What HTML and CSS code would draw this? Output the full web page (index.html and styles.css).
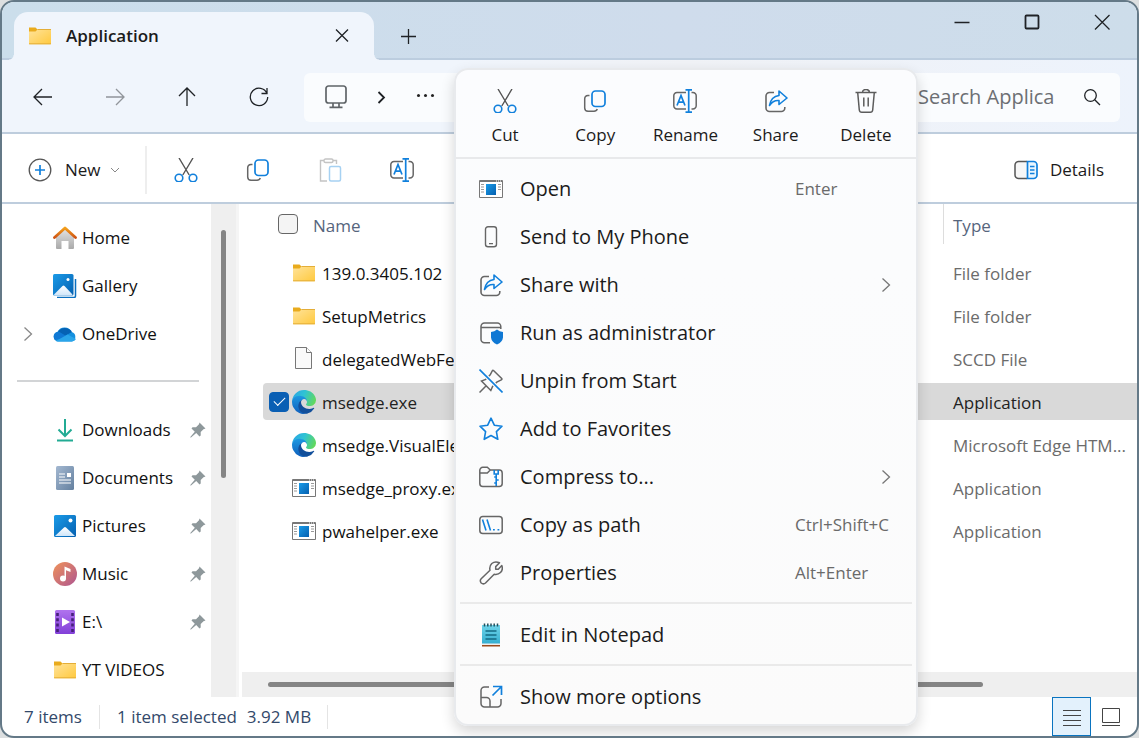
FILE: index.html
```html
<!DOCTYPE html>
<html lang="en">
<head>
<meta charset="utf-8">
<title>Application</title>
<link rel="stylesheet" href="styles.css">
</head>
<body>
<svg class="sprite" aria-hidden="true">
  <defs>
    <linearGradient id="gFolder" x1="0" y1="0" x2="1" y2="1"><stop offset="0" stop-color="#ffe39a"/><stop offset="1" stop-color="#ffc93e"/></linearGradient>
    <linearGradient id="gBlue" x1="0" y1="0" x2="1" y2="1"><stop offset="0" stop-color="#1a9be8"/><stop offset="1" stop-color="#0560b0"/></linearGradient>
    <linearGradient id="gSnow" x1="0" y1="0" x2="0" y2="1"><stop offset="0" stop-color="#fff"/><stop offset="1" stop-color="#cfe6fa"/></linearGradient>
    <linearGradient id="gRoof" x1="0" y1="0" x2="0" y2="1"><stop offset="0" stop-color="#f3a01c"/><stop offset="1" stop-color="#cf5414"/></linearGradient>
    <linearGradient id="gWall" x1="0" y1="0" x2="0" y2="1"><stop offset="0" stop-color="#e4e4e4"/><stop offset="1" stop-color="#a9a9a9"/></linearGradient>
    <linearGradient id="gDoc" x1="0" y1="0" x2="1" y2="1"><stop offset="0" stop-color="#a3b8d1"/><stop offset="1" stop-color="#64809f"/></linearGradient>
    <linearGradient id="gMusic" x1="0" y1="0" x2="1" y2="1"><stop offset="0" stop-color="#f0935a"/><stop offset="1" stop-color="#ae5590"/></linearGradient>
    <linearGradient id="gVideo" x1="0" y1="0" x2="0" y2="1"><stop offset="0" stop-color="#b073ee"/><stop offset="1" stop-color="#8240d8"/></linearGradient>
    <linearGradient id="gEdgeTop" x1="0" y1=".3" x2="1" y2=".6"><stop offset="0" stop-color="#2aa6e4"/><stop offset=".45" stop-color="#2fc3d4"/><stop offset="1" stop-color="#63d95a"/></linearGradient>
    <linearGradient id="gEdgeLeft" x1="0" y1="0" x2="0" y2="1"><stop offset="0" stop-color="#1e9ce4"/><stop offset="1" stop-color="#0f5fbc"/></linearGradient>
    <linearGradient id="gNote" x1="0" y1="0" x2="0" y2="1"><stop offset="0" stop-color="#6fd4ea"/><stop offset="1" stop-color="#35aed0"/></linearGradient>

    <symbol id="folder" viewBox="0 0 24 24"><path d="M1 3.500h6.500l2 2v4H1z" fill="#e9ab1d"/><path d="M1 7.500h6.500l2-2H23V19.500a.8.800 0 0 1-.8.800H1.800A.8.800 0 0 1 1 19.500z" fill="url(#gFolder)"/><path d="M1 19.800h22M9.500 5.500H23" stroke="#e4ae38"/></symbol>
    <symbol id="file" viewBox="0 0 24 24"><path d="M3.500.5h11l5 5V21.500h-16z" fill="#fafafa" stroke="#777"/><path d="M14.500.5v5h5" fill="#fff" stroke="#777"/></symbol>
    <symbol id="exe" viewBox="0 0 24 24"><path d="M.5 3.500h23v17H.5z" fill="#fff" stroke="#777"/><path d="M1 4h22" stroke="#777" stroke-width="2"/><path d="M7 7h10v11H7z" fill="url(#gBlue)"/><path d="M2 7.500h3M2 10h3M2 12.500h3M2 15h3M19 7.500h3M19 10h3M19 12.500h3" stroke="#999"/><path d="M17 4h1M19 4h1M21 4h1" stroke="#fff"/></symbol>
    <symbol id="edge" viewBox="0 0 256 256">
      <path d="M231 190.500c-3.400 1.800-6.900 3.400-10.500 4.700a102 102 0 0 1-35.900 6.500c-47.300 0-88.500-32.500-88.500-74.300a31.500 31.500 0 0 1 16.400-27.300c-42.800 1.800-53.800 46.400-53.800 72.500 0 74 68.100 81.400 82.800 81.400 7.900 0 19.800-2.300 27-4.600l1.300-.4a128 128 0 0 0 66.600-52.800 4 4 0 0 0-5.400-5.700z" fill="#124f9b"/>
      <path d="M105.700 241.400a79 79 0 0 1-22.700-21.300 80.700 80.700 0 0 1 29.500-120c3.200-1.500 8.500-4.200 15.600-4.100a32.400 32.400 0 0 1 25.700 13 32 32 0 0 1 6.300 18.700c0-.2 24.500-79.600-80-79.600-43.900 0-80 41.600-80 78.200a130 130 0 0 0 12.100 56 128 128 0 0 0 156.400 67 75.500 75.500 0 0 1-62.800-8z" fill="url(#gEdgeLeft)"/>
      <path d="M152.300 148.900c-.8 1-3.300 2.500-3.300 5.700 0 2.600 1.700 5.100 4.700 7.200 14.400 10 41.500 8.700 41.600 8.700a59.600 59.600 0 0 0 30.300-8.300 61.400 61.400 0 0 0 30.400-52.900c.3-22.400-8-37.300-11.300-43.900C223.500 24 177.700 0 128 0A128 128 0 0 0 0 126.200c.5-36.500 36.800-66 80-66 3.500 0 23.500.3 42 10.100 16.300 8.600 24.900 19 30.900 29.200 6.200 10.700 7.300 24.200 7.300 29.600 0 5.300-2.700 13.300-7.900 19.900z" fill="url(#gEdgeTop)"/>
    </symbol>
    <symbol id="home" viewBox="0 0 24 24"><path d="M3 10.500 12 2.500l9 8V22a1 1 0 0 1-1 1h-4.500v-8h-7v8H4a1 1 0 0 1-1-1z" fill="url(#gWall)"/><path d="M1.500 11.500 12 2l10.500 9.500" fill="none" stroke="url(#gRoof)" stroke-width="2.800" stroke-linecap="round" stroke-linejoin="round"/></symbol>
    <symbol id="gallery" viewBox="0 0 24 24"><path d="M22.500 5v17a1.500 1.500 0 0 1-1.500 1.500H4" fill="none" stroke="#0a6fc0" stroke-width="1.500"/><rect width="20.500" height="21.500" rx="1.500" fill="url(#gBlue)"/><path d="M1 20.500 9.500 12q1-1 2 0l8 8.500-1 1H1.500z" fill="url(#gSnow)"/><circle cx="15" cy="5.500" r="1.500" fill="#fff"/></symbol>
    <symbol id="cloud" viewBox="0 0 24 24"><path d="M5 19.500A5 5 0 0 1 4.500 9.700 8 8 0 0 1 18.800 10 5 5 0 0 1 19 19.500z" fill="#1490df"/><path d="M5 10a8 8 0 0 1 13.800 0L12 14z" fill="#0562b4"/><path d="M2 18a5 5 0 0 1 4-8.300L15 15z" fill="#0f78d4"/><path d="M3 19q1 .6 2 .6h14a5 5 0 0 0 4-2.600L14.500 12.500z" fill="#2aa5ea"/></symbol>
    <symbol id="download" viewBox="0 0 24 24"><path d="M12 1v17M5.500 11.500 12 18l6.500-6.500M4 22.500h16" fill="none" stroke="#22ab94" stroke-width="2"/></symbol>
    <symbol id="document" viewBox="0 0 24 24"><rect x="3" width="18" height="24" rx="1.500" fill="url(#gDoc)"/><path d="M6 8h6M6 11h6M6 14h12M6 17h12" stroke="#fff" stroke-width="1.200"/><path d="M14 7h4v4h-4z" fill="#fff"/></symbol>
    <symbol id="picture" viewBox="0 0 24 24"><rect x="1" y="1" width="22" height="22" rx="1.500" fill="url(#gBlue)"/><path d="M2 22 11 13.500q1-1 2 0L22 22z" fill="url(#gSnow)"/><circle cx="17.500" cy="6.500" r="2" fill="#fff"/></symbol>
    <symbol id="music" viewBox="0 0 24 24"><circle cx="12" cy="12" r="12" fill="url(#gMusic)"/><circle cx="10" cy="16.500" r="3" fill="#fff"/><path d="M11.500 16.500V4.500l6 2.500v3l-4.500-1.800v8.300z" fill="#fff"/></symbol>
    <symbol id="video" viewBox="0 0 24 24"><rect x="2" y="0" width="20" height="24" rx="1.500" fill="url(#gVideo)"/><path d="M4.500 3v20M19.500 3v20" stroke="#46207a" stroke-width="2.600" stroke-dasharray="3 2.300"/><path d="M9 7.500v9l8-4.500z" fill="#fff"/></symbol>
    <symbol id="pin" viewBox="0 0 16 16"><path d="m9.500.5 6 6-2 .8-2.800 2.800v3.400l-1.200 1-3.300-3.400L1 15.500H.3V15l4.500-5.300L1.500 6.500l1-1.200H6l3-3z" fill="#8e989b"/></symbol>

    <symbol id="cut" viewBox="0 0 24 24"><path d="M5 0l10.200 17M19 0 8.800 17" fill="none" stroke="#555" stroke-width="1.400"/><circle cx="5" cy="20" r="3.800" fill="none" stroke="#1180dc" stroke-width="1.600"/><circle cx="19" cy="20" r="3.800" fill="none" stroke="#1180dc" stroke-width="1.600"/></symbol>
    <symbol id="copy" viewBox="0 0 24 24"><path d="M6.500 6.500H5A3.500 3.500 0 0 0 1.700 10v9A3.500 3.500 0 0 0 5 22.300h6a3.500 3.500 0 0 0 3.300-2.300" fill="none" stroke="#666" stroke-width="1.500"/><rect x="9" y="2" width="13" height="15.500" rx="3.500" fill="none" stroke="#1180dc" stroke-width="1.700"/></symbol>
    <symbol id="paste" viewBox="0 0 24 24"><path d="M6 2.500H2.500V23H9M15 2.500h3.500V6" fill="none" stroke="#c4c4c4" stroke-width="1.400"/><rect x="6" y="1" width="9" height="3.500" rx="1.500" fill="none" stroke="#c4c4c4" stroke-width="1.400"/><rect x="11.500" y="8.500" width="11" height="14.500" rx="1.500" fill="none" stroke="#a6d1f2" stroke-width="1.500"/></symbol>
    <symbol id="rename" viewBox="0 0 24 24"><path d="M13 3.500H4A3.300 3.300 0 0 0 .8 7v9.500A3.300 3.300 0 0 0 4 20h9M18.500 3.500h1.300A3.300 3.300 0 0 1 23.200 7v9.500a3.300 3.300 0 0 1-3.400 3.500h-1.300" fill="none" stroke="#666" stroke-width="1.500"/><path d="M12.500.8h6.500M12.500 23.200h6.500M15.700.8v22.400M4 16.500l4-10 4 10M5.300 13.200h5.400" fill="none" stroke="#1180dc" stroke-width="1.700"/></symbol>
    <symbol id="share" viewBox="0 0 24 24"><path d="M10 3.500H5.500A3.500 3.500 0 0 0 2 7v12a3.500 3.500 0 0 0 3.500 3.500h11.800a3.500 3.500 0 0 0 3.500-3.500v-1" fill="none" stroke="#666" stroke-width="1.600"/><path d="M15 2l8 7-8 6.500v-4Q9 11 5.500 16.500 7 7.500 15 6.500z" fill="none" stroke="#1180dc" stroke-width="1.600" stroke-linejoin="round"/></symbol>
    <symbol id="trash" viewBox="0 0 24 24"><path d="M1.500 3.500h21M8.500 3.500a3.500 3 0 0 1 7 0M3.700 3.500 5.300 21a2.500 2.500 0 0 0 2.500 2.200h8.400a2.500 2.500 0 0 0 2.500-2.200l1.600-17.500M9.800 8.500v9M14.200 8.500v9" fill="none" stroke="#5c5c5c" stroke-width="1.500"/></symbol>
    <symbol id="phone" viewBox="0 0 24 24"><rect x="6.500" y="1.800" width="11" height="20" rx="2.500" fill="none" stroke="#666" stroke-width="1.400"/><path d="M10 18.700h4" stroke="#666" stroke-width="1.300"/></symbol>
    <symbol id="admin" viewBox="0 0 24 24"><path d="M11 21.800H5.500A3.500 3.500 0 0 1 2 18.300V5.500A3.500 3.500 0 0 1 5.500 2h12.800a3.500 3.500 0 0 1 3.500 3.500V8M2 6.500h19.800" fill="none" stroke="#666" stroke-width="1.500"/><path d="M18 8.500q2.500 2.300 6 2.500v5.500q-.5 4.500-6 7-5.500-2.500-6-7V11q3.500-.2 6-2.500z" fill="#0f78d4"/></symbol>
    <symbol id="unpin" viewBox="0 0 24 24"><path d="M14.500 1.500 22.700 9.500q.6.800-.4 1.300l-4.500 2.400-4.200 4.200-1.800 4.100L2.500 12l4.200-1.600 4.500-4.500L13.400 1.700q.5-.7 1.100-.2zM7.200 16.700.5 23.500" fill="none" stroke="#666" stroke-width="1.500"/><path d="M.5.500l23 23" stroke="#fbfcfd" stroke-width="4"/><path d="M.5.500l23 23" stroke="#1180dc" stroke-width="1.600"/></symbol>
    <symbol id="star" viewBox="0 0 24 24"><path d="M12 1.200l3.300 7 7.700 1-5.600 5.400 1.400 7.700L12 18.500l-6.800 3.800 1.400-7.700L1 9.200l7.700-1z" fill="none" stroke="#1180dc" stroke-width="1.600" stroke-linejoin="round"/></symbol>
    <symbol id="zip" viewBox="0 0 24 24"><path d="M.8 18.500V5.300A3 3 0 0 1 3.800 2.300h4.500L11.300 5h9A3 3 0 0 1 23.200 8v10.500a3 3 0 0 1-3 3H3.800a3 3 0 0 1-3-3zM.8 8h7.500l3-3" fill="none" stroke="#666" stroke-width="1.500"/><path d="M15.200 5v4h4V5M17.200 9v12M17.200 12h-2M17.200 15h2.500M17.200 18h-2" fill="none" stroke="#1180dc" stroke-width="1.600"/></symbol>
    <symbol id="path" viewBox="0 0 24 24"><rect x=".8" y="3.500" width="22.400" height="17" rx="3" fill="none" stroke="#666" stroke-width="1.500"/><path d="M3.500 6.500l3.500 11M8 6.500l3.500 11M14 16.700h1.800M18.500 16.700h1.800" stroke="#1180dc" stroke-width="1.600"/></symbol>
    <symbol id="wrench" viewBox="0 0 24 24"><path d="M20.500 1.800 16.700 5.600v2.600h2.600L22.800 4.500q1.500 4.300-1.300 7-2.700 2.500-6.300 1.700L6.500 22q-2 1.800-4.300 0-1.800-2.200 0-4.300L11 9.200q-1-4 1.800-6.700 3.200-2.500 7.700-.7z" fill="none" stroke="#666" stroke-width="1.500" stroke-linejoin="round"/></symbol>
    <symbol id="notepad" viewBox="0 0 24 24"><path d="M3 20h18v3.500H3z" fill="#9b4a1c"/><path d="M3 19.500h18V22H3z" fill="#eee"/><path d="M3 2h18v18.500H3z" fill="url(#gNote)"/><path d="M6.500 8h11M6.500 12h11M6.500 16h11" stroke="#146b85" stroke-width="1.500"/><path d="M5.500.500v3M8.800.500v3M12 .500v3M15.200.500v3M18.500.500v3" stroke="#24505e" stroke-width="1.500"/></symbol>
    <symbol id="more" viewBox="0 0 24 24"><path d="M10 2H5.500A3.500 3.500 0 0 0 2 5.500v13A3.500 3.500 0 0 0 5.500 22h13a3.500 3.500 0 0 0 3.500-3.500V14M2 12.500h5.500a3.500 3.500 0 0 1 3.500 3.500v6" fill="none" stroke="#666" stroke-width="1.500"/><path d="M13.500 10.500l9-9M14 1.500h8.500V10" fill="none" stroke="#1180dc" stroke-width="1.700"/></symbol>
    <symbol id="chevron" viewBox="0 0 24 24"><path d="M8.500 5.500l7 6.500-7 6.500" fill="none" stroke="currentColor" stroke-width="1.300"/></symbol>
  </defs>
</svg>

<main class="window">
  <header class="titlebar">
    <div class="tab">
      <svg class="icon"><use href="#folder"/></svg>
      <span class="tab-title">Application</span>
      <button class="plain" aria-label="Close tab"><svg class="icon" viewBox="0 0 24 24"><path d="M6 5.500l12 12M18 5.500l-12 12" class="ink"/></svg></button>
    </div>
    <button class="plain new-tab" aria-label="New tab"><svg class="icon" viewBox="0 0 24 24"><path d="M12.500 5v15M5 12.500h15" class="ink"/></svg></button>
    <div class="window-controls">
      <button class="plain" aria-label="Minimize"><svg class="icon" viewBox="0 0 24 24"><path d="M4.500 12.500h15" class="ink"/></svg></button>
      <button class="plain" aria-label="Maximize"><svg class="icon" viewBox="0 0 24 24"><rect x="5.500" y="5.500" width="13" height="13" rx="1" class="ink bold"/></svg></button>
      <button class="plain" aria-label="Close"><svg class="icon" viewBox="0 0 24 24"><path d="M5 5l14.500 14.500M19.500 5 5 19.500" class="ink"/></svg></button>
    </div>
  </header>

  <div class="navbar">
    <div class="nav-buttons">
      <button class="plain" aria-label="Back"><svg class="icon" viewBox="0 0 24 24"><path d="M11 4l-8 8 8 8M3 12h18" class="ink"/></svg></button>
      <button class="plain muted" aria-label="Forward" disabled><svg class="icon" viewBox="0 0 24 24"><path d="M13 4l8 8-8 8M21 12H3" class="ink"/></svg></button>
      <button class="plain" aria-label="Up"><svg class="icon" viewBox="0 0 24 24"><path d="M4 11l8-8 8 8M12 3v18" class="ink"/></svg></button>
      <button class="plain" aria-label="Refresh"><svg class="icon" viewBox="0 0 24 24"><path d="M20 8.500A8.700 8.700 0 1 0 20.700 12M20 3v5.500h-5.500" class="ink"/></svg></button>
    </div>
    <div class="address">
      <svg class="icon" viewBox="0 0 24 24"><path d="M4.500 1h15A2.500 2.500 0 0 1 22 3.500v12a2.500 2.500 0 0 1-2.500 2.500h-15A2.500 2.500 0 0 1 2 15.500v-12A2.500 2.500 0 0 1 4.500 1zM9 18v4M15 18v4M5.500 22.300h13" fill="none" stroke="#5f6468" stroke-width="1.700"/></svg>
      <svg class="icon" viewBox="0 0 24 24"><path d="M9.500 7l5.500 5.500-5.500 5.500" class="ink bold"/></svg>
      <button class="plain" aria-label="More locations"><svg class="icon" viewBox="0 0 24 24"><g fill="#222"><circle cx="4.500" cy="10.500" r="1.500"/><circle cx="11.500" cy="10.500" r="1.500"/><circle cx="18.500" cy="10.500" r="1.500"/></g></svg></button>
    </div>
    <div class="search">
      <input type="text" placeholder="Search Applica" aria-label="Search Application">
      <button class="plain" aria-label="Search"><svg class="icon" viewBox="0 0 24 24"><circle cx="10.500" cy="10.500" r="5.800" class="ink"/><path d="M14.700 14.700l5.300 5.300" class="ink"/></svg></button>
    </div>
  </div>

  <div class="toolbar">
    <button class="plain new-button">
      <svg class="icon" viewBox="0 0 24 24"><circle cx="12" cy="12" r="10.800" fill="none" stroke="#555" stroke-width="1.300"/><path d="M12 7v10M7 12h10" stroke="#1180dc" stroke-width="1.700"/></svg>
      <span>New</span>
      <svg class="icon small" viewBox="0 0 16 16"><path d="M4 6l4 4 4-4" fill="none" stroke="#888"/></svg>
    </button>
    <div class="tools">
      <button class="plain" aria-label="Cut"><svg class="icon"><use href="#cut"/></svg></button>
      <button class="plain" aria-label="Copy"><svg class="icon"><use href="#copy"/></svg></button>
      <button class="plain" aria-label="Paste" disabled><svg class="icon"><use href="#paste"/></svg></button>
      <button class="plain" aria-label="Rename"><svg class="icon"><use href="#rename"/></svg></button>
    </div>
    <button class="plain details-button">
      <svg class="icon" viewBox="0 0 24 24"><path d="M13 3.500H4.500A3.500 3.500 0 0 0 1 7v10a3.500 3.500 0 0 0 3.500 3.500H13" fill="#f7f7f7" stroke="#555" stroke-width="1.500"/><path d="M13.500 3.500h6A3.500 3.500 0 0 1 23 7v10a3.500 3.500 0 0 1-3.500 3.500h-6z" fill="#e8f6ff" stroke="#1180dc" stroke-width="1.700"/><path d="M16 8.500h4.500M16 12h4.500M16 15.500h4.500" stroke="#1180dc" stroke-width="1.300"/></svg>
      <span>Details</span>
    </button>
  </div>

  <div class="content">
    <nav class="sidebar">
      <div class="places">
        <a class="place" href="#"><svg class="icon"><use href="#home"/></svg><span>Home</span></a>
        <a class="place" href="#"><svg class="icon"><use href="#gallery"/></svg><span>Gallery</span></a>
        <a class="place expandable" href="#"><svg class="icon expander"><use href="#chevron"/></svg><svg class="icon"><use href="#cloud"/></svg><span>OneDrive</span></a>
        <hr class="divider">
        <a class="place" href="#"><svg class="icon"><use href="#download"/></svg><span>Downloads</span><svg class="pin"><use href="#pin"/></svg></a>
        <a class="place" href="#"><svg class="icon"><use href="#document"/></svg><span>Documents</span><svg class="pin"><use href="#pin"/></svg></a>
        <a class="place" href="#"><svg class="icon"><use href="#picture"/></svg><span>Pictures</span><svg class="pin"><use href="#pin"/></svg></a>
        <a class="place" href="#"><svg class="icon"><use href="#music"/></svg><span>Music</span><svg class="pin"><use href="#pin"/></svg></a>
        <a class="place" href="#"><svg class="icon"><use href="#video"/></svg><span>E:\</span><svg class="pin"><use href="#pin"/></svg></a>
        <a class="place" href="#"><svg class="icon"><use href="#folder"/></svg><span>YT VIDEOS</span></a>
      </div>
      <div class="scroll-v"><div class="thumb-v"></div></div>
    </nav>

    <section class="files">
      <div class="file-area">
        <table class="file-table">
          <thead>
            <tr>
              <th class="col-name"><div class="head"><input type="checkbox" class="check" id="all" aria-label="Select all"><label for="all">Name</label></div></th>
              <th class="col-type"><div class="head type-head">Type</div></th>
            </tr>
          </thead>
          <tbody>
            <tr><td><div class="file"><svg class="icon"><use href="#folder"/></svg><span>139.0.3405.102</span></div></td><td>File folder</td></tr>
            <tr><td><div class="file"><svg class="icon"><use href="#folder"/></svg><span>SetupMetrics</span></div></td><td>File folder</td></tr>
            <tr><td><div class="file"><svg class="icon"><use href="#file"/></svg><span>delegatedWebFeatures.sccd</span></div></td><td>SCCD File</td></tr>
            <tr class="selected"><td><div class="file"><input type="checkbox" class="check" aria-label="msedge.exe" checked><svg class="icon"><use href="#edge"/></svg><span>msedge.exe</span></div></td><td>Application</td></tr>
            <tr><td><div class="file"><svg class="icon"><use href="#edge"/></svg><span>msedge.VisualElementsManifest.xml</span></div></td><td>Microsoft Edge HTM...</td></tr>
            <tr><td><div class="file"><svg class="icon"><use href="#exe"/></svg><span>msedge_proxy.exe</span></div></td><td>Application</td></tr>
            <tr><td><div class="file"><svg class="icon"><use href="#exe"/></svg><span>pwahelper.exe</span></div></td><td>Application</td></tr>
          </tbody>
        </table>
      </div>
      <div class="scroll-h"><div class="thumb-h"></div></div>
    </section>
  </div>

  <footer class="status">
    <span class="status-count">7 items</span>
    <span class="status-selection"><span>1 item selected</span><span>3.92 MB</span></span>
    <div class="views">
      <button class="plain view active" aria-label="Details view"><svg class="icon" viewBox="0 0 24 24"><path d="M3 5.500h18M3 10.500h18M3 15.500h18M3 20.500h18" class="line"/></svg></button>
      <button class="plain view" aria-label="Large icons view"><svg class="icon" viewBox="0 0 24 24"><path d="M3.500 3.500h17v14h-17zM3 20.500h18" class="line"/></svg></button>
    </div>
  </footer>

  <div class="menu" role="menu">
    <div class="menu-actions">
      <button class="plain action"><svg class="icon"><use href="#cut"/></svg><span>Cut</span></button>
      <button class="plain action"><svg class="icon"><use href="#copy"/></svg><span>Copy</span></button>
      <button class="plain action"><svg class="icon"><use href="#rename"/></svg><span>Rename</span></button>
      <button class="plain action"><svg class="icon"><use href="#share"/></svg><span>Share</span></button>
      <button class="plain action"><svg class="icon"><use href="#trash"/></svg><span>Delete</span></button>
    </div>
    <div class="menu-group">
      <button class="plain item"><svg class="icon"><use href="#exe"/></svg><span>Open</span><kbd>Enter</kbd></button>
      <button class="plain item"><svg class="icon"><use href="#phone"/></svg><span>Send to My Phone</span></button>
      <button class="plain item"><svg class="icon"><use href="#share"/></svg><span>Share with</span><svg class="icon sub"><use href="#chevron"/></svg></button>
      <button class="plain item"><svg class="icon"><use href="#admin"/></svg><span>Run as administrator</span></button>
      <button class="plain item"><svg class="icon"><use href="#unpin"/></svg><span>Unpin from Start</span></button>
      <button class="plain item"><svg class="icon"><use href="#star"/></svg><span>Add to Favorites</span></button>
      <button class="plain item"><svg class="icon"><use href="#zip"/></svg><span>Compress to...</span><svg class="icon sub"><use href="#chevron"/></svg></button>
      <button class="plain item"><svg class="icon"><use href="#path"/></svg><span>Copy as path</span><kbd>Ctrl+Shift+C</kbd></button>
      <button class="plain item"><svg class="icon"><use href="#wrench"/></svg><span>Properties</span><kbd>Alt+Enter</kbd></button>
    </div>
    <div class="menu-group">
      <button class="plain item"><svg class="icon"><use href="#notepad"/></svg><span>Edit in Notepad</span></button>
    </div>
    <div class="menu-group">
      <button class="plain item"><svg class="icon"><use href="#more"/></svg><span>Show more options</span></button>
    </div>
  </div>
</main>
</body>
</html>
```
FILE: styles.css
```css
* { box-sizing: border-box; }

body {
  margin: 0;
  background: #dcdfe0;
  font-family: "Open Sans", "Noto Sans", sans-serif;
  font-size: 17px;
  line-height: 24px;
  color: #1b1b1b;
}

.sprite { position: absolute; width: 0; height: 0; }
.icon { display: block; width: 24px; height: 24px; flex: none; overflow: visible; }
.icon.small { width: 16px; height: 16px; }
.ink { fill: none; stroke: #1f2226; stroke-width: 1.3; }
.ink.bold { stroke-width: 1.8; }
.line { fill: none; stroke: #444; stroke-width: 1; }

.plain {
  display: flex;
  align-items: center;
  justify-content: center;
  margin: 0;
  padding: 0;
  border: 0;
  background: none;
  font: inherit;
  color: inherit;
}
.muted { opacity: 0.45; }

.window {
  position: relative;
  display: flex;
  flex-direction: column;
  height: 100vh;
  min-height: 738px;
  border: 2px solid #647987;
  border-radius: 14px;
  background: #fff;
  overflow: hidden;
}

/* Title bar */
.titlebar {
  display: flex;
  align-items: center;
  height: 58px;
  padding-left: 12px;
  background: linear-gradient(90deg, #cbdeeb, #cfdcec 60%, #cdddea);
  box-shadow: inset 0 -2px #bccddf;
}
.tab {
  position: relative;
  align-self: flex-end;
  display: flex;
  align-items: center;
  width: 360px;
  height: 48px;
  padding: 0 20px 0 14px;
  border-radius: 14px 14px 0 0;
  background: #f0f5fc;
}
.tab::before,
.tab::after {
  content: "";
  position: absolute;
  bottom: 0;
  width: 5px;
  height: 5px;
}
.tab::before { right: 100%; background: radial-gradient(circle at 0 0, transparent 4px, #f0f5fc 5px); }
.tab::after { left: 100%; background: radial-gradient(circle at 100% 0, transparent 4px, #f0f5fc 5px); }
.tab-title { flex: 1; padding-left: 14px; font-weight: 600; }
.new-tab { margin: 10px 0 0 22px; }
.window-controls {
  align-self: flex-start;
  display: flex;
  gap: 46px;
  margin-left: auto;
  padding: 8px 23px 0 0;
}

/* Navigation bar */
.navbar {
  display: flex;
  align-items: center;
  gap: 12px;
  height: 74px;
  padding: 2px 17px 0 0;
  border-bottom: 2px solid #becddd;
  background: linear-gradient(90deg, #f0f5fc 40%, #f0f2f6 60%, #edf3fc);
}
.nav-buttons { display: flex; gap: 48px; width: 290px; padding-left: 29px; }
.address,
.search { display: flex; align-items: center; height: 49px; border-radius: 6px; background: #fafcfe; }
.address { flex: 1; gap: 21px; padding-left: 20px; }
.search { width: 218px; padding: 0 16px; }
.search input {
  flex: 1;
  min-width: 0;
  padding: 0;
  border: 0;
  outline: 0;
  background: none;
  font: inherit;
  font-size: 20px;
}
.search input::placeholder { color: #6c6f73; opacity: 1; }

/* Command bar */
.toolbar {
  display: flex;
  align-items: center;
  height: 70px;
  padding: 3px 33px 0 26px;
  border-bottom: 2px solid #becddd;
}
.new-button { padding-right: 22px; border-right: 2px solid #eee; height: 48px; }
.new-button span { padding: 0 6px 0 13px; }
.tools { display: flex; gap: 48px; padding-left: 27px; }
.details-button { gap: 12px; margin-left: auto; }

/* Places list */
.content { display: flex; flex: 1; min-height: 0; }
.sidebar { display: flex; width: 237px; border-right: 3px solid #f5f5f5; }
.places { flex: 1; padding-top: 10px; }
.place {
  display: flex;
  align-items: center;
  height: 48px;
  padding: 0 5px 0 51px;
  color: #111;
  text-decoration: none;
}
.place span { flex: 1; padding-left: 5px; }
.expandable { padding-left: 14px; }
.expander { margin-right: 13px; color: #888; }
.pin { width: 16px; height: 16px; }
.divider { height: 2px; margin: 22px 12px 24px 15px; border: 0; background: #d2d4d6; }
.scroll-v { width: 25px; padding: 26px 10px 0; background: #efefef; }
.thumb-v { height: 248px; border-radius: 3px; background: #858585; }

/* File list */
.files { display: flex; flex: 1; flex-direction: column; min-width: 0; padding-left: 3px; }
.file-area { flex: 1; padding-left: 21px; overflow: hidden; }
.file-table {
  width: 100%;
  margin-top: -6px;
  border-collapse: separate;
  border-spacing: 0 6px;
  table-layout: fixed;
}
.col-type { width: 194px; }
th { height: 44px; padding: 0; font-weight: 400; text-align: left; vertical-align: top; color: #56657d; }
.head { display: flex; align-items: center; gap: 15px; height: 40px; padding-left: 15px; }
.type-head { padding: 4px 0 0 9px; border-left: 1px solid #ddd; }
.head label { padding-top: 4px; }
td { height: 37px; padding: 3px 0 0 10px; color: #6b6b6b; white-space: nowrap; }
td:first-child { padding: 0; color: #111; }
.file { display: flex; align-items: center; width: 205px; height: 37px; padding-left: 29px; gap: 6px; }
.file span { padding-top: 3px; overflow: hidden; }
.selected .file { padding-left: 6px; }
.selected .check { margin-right: -3px; }
.selected td { background: #d9d9d9; color: #222; }
.selected td:first-child { border-radius: 4px 0 0 4px; }
.check {
  flex: none;
  appearance: none;
  width: 20px;
  height: 20px;
  margin: 0;
  border: 1px solid #666;
  border-radius: 4px;
  background: #f4f4f4;
}
.check:checked { display: grid; place-items: center; border-color: #0a5fb4; background: #0a5fb4; }
.check:checked::before {
  content: "";
  width: 10px;
  height: 5px;
  margin-bottom: 4px;
  border: solid #fff;
  border-width: 0 0 1px 1px;
  rotate: -45deg;
}
.scroll-h { height: 25px; padding: 10px 154px 0 26px; background: #efefef; }
.thumb-h { height: 5px; border-radius: 3px; background: #858585; }

/* Status bar */
.status { display: flex; align-items: center; height: 39px; padding: 0 7px 0 22px; color: #33496a; }
.status-count { width: 76px; border-right: 1px solid #e4e4e4; }
.status-selection { display: flex; gap: 10px; padding: 0 16px 0 17px; border-right: 1px solid #e4e4e4; }
.views { display: flex; margin-left: auto; }
.view { width: 39px; height: 39px; }
.view.active { border: 1px solid #0a74c0; background: #e3f1fc; }

/* Context menu */
.menu {
  position: absolute;
  top: 66px;
  left: 452px;
  width: 464px;
  border: 2px solid #e8eaed;
  border-radius: 14px;
  background: linear-gradient(#fbfcfe, #fbfcfd 30%, #fbfbfb);
  box-shadow: 0 6px 14px rgba(0, 0, 0, 0.16);
}
.menu-actions {
  display: grid;
  grid-template-columns: repeat(5, 1fr);
  height: 89px;
  padding: 0 5px 0 4px;
  border-bottom: 2px solid #e8e9eb;
}
.action { flex-direction: column; gap: 10px; padding-top: 8px; }
.menu-group { padding: 6px 0 5px; }
.menu-group + .menu-group { margin: 0 4px; padding: 7px 0 5px; border-top: 2px solid #eaeaea; }
.menu-group + .menu-group .item { padding-left: 19px; }
.menu-group + .menu-group:last-child { padding-bottom: 3px; }
.item {
  display: grid;
  grid-template-columns: 24px 1fr 103px;
  justify-content: start;
  justify-items: start;
  column-gap: 17px;
  width: 100%;
  height: 48px;
  padding: 0 18px 0 23px;
  font-size: 20px;
  line-height: 28px;
  text-align: left;
}
.item kbd { font-family: inherit; font-size: 17px; color: #6a6a6a; }
.sub { justify-self: end; color: #777; }
```
